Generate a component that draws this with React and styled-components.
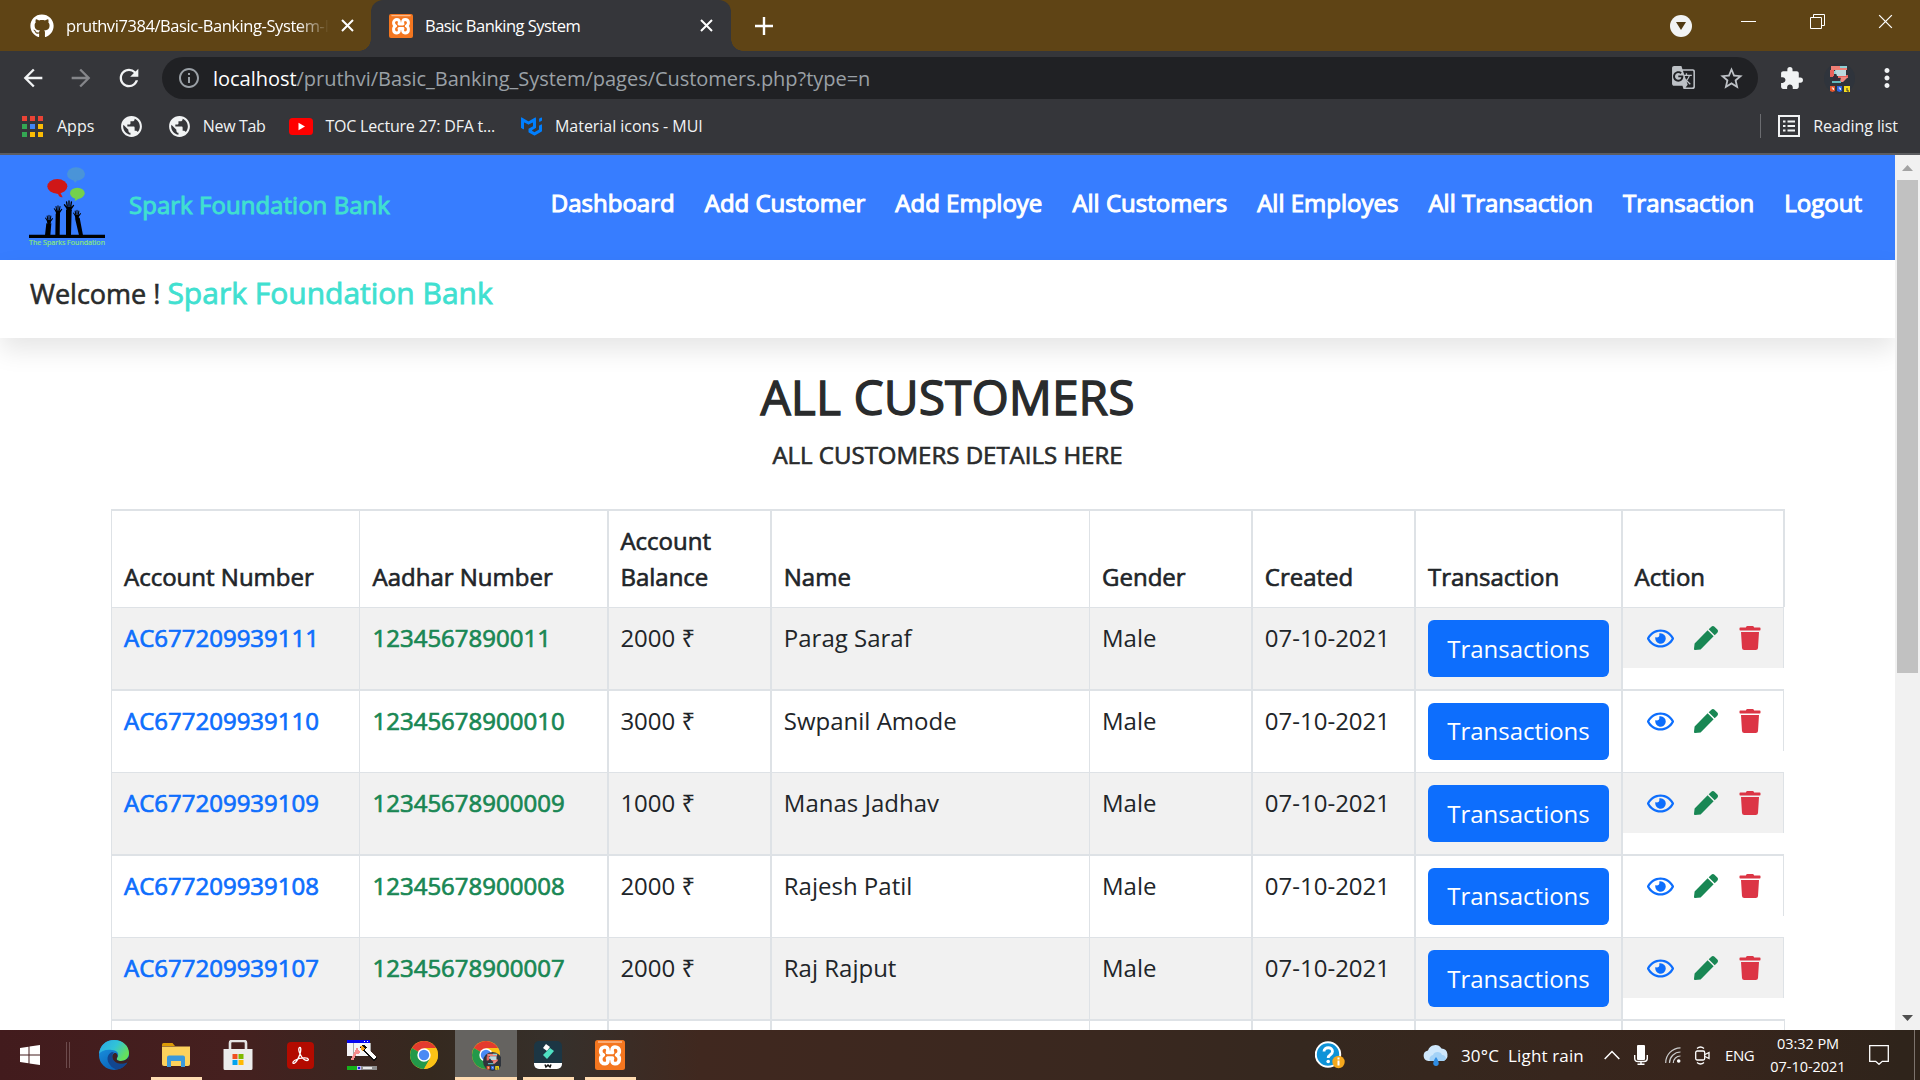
import React from "react";
import styled, { createGlobalStyle } from "styled-components";
import { FaGithub, FaRegEye, FaPen, FaTrash } from "react-icons/fa";
import { MdArrowBack, MdArrowForward, MdRefresh, MdInfoOutline, MdGTranslate, MdStarBorder, MdExtension, MdMoreVert, MdPublic } from "react-icons/md";
import { SiMui } from "react-icons/si";

const Global = createGlobalStyle`
  * { box-sizing: border-box; }
  body { margin: 0; background: #fff; overflow: hidden; }
  svg { display: block; flex: none; }
`;

const Screen = styled.div`
  width: 1920px; height: 1080px; overflow: hidden;
  display: flex; flex-direction: column;
  font-family: "Open Sans", "Noto Sans", sans-serif;
`;

/* ---------- browser chrome ---------- */
const TabStrip = styled.div`
  height: 51px; background: #5f4415; display: flex; flex: none; color: #fff;
`;
const Tab = styled.div`
  width: ${p => p.$width}px; height: 51px; padding: 0 18px 0 ${p => p.$left}px;
  display: flex; align-items: center; gap: 12px; flex: none;
  background: ${p => (p.$active ? "#35363a" : "transparent")};
  border-radius: 12px 12px 0 0; position: relative;
  &::before, &::after {
    content: ""; display: ${p => (p.$active ? "block" : "none")};
    position: absolute; bottom: 0; width: 12px; height: 12px;
  }
  &::before { left: -12px; background: radial-gradient(circle at 0 0, transparent 11.5px, #35363a 12px); }
  &::after { right: -12px; background: radial-gradient(circle at 100% 0, transparent 11.5px, #35363a 12px); }
`;
const TabTitle = styled.span`
  flex: 1; white-space: nowrap; font-size: 16.5px; line-height: 24px;
  letter-spacing: ${p => p.$spacing}px;
  mask-image: ${p => (p.$fade ? "linear-gradient(90deg,#000 88%,transparent)" : "none")};
`;
const NewTab = styled.div`
  width: 65px; display: flex; align-items: center; justify-content: center;
`;
const WindowButtons = styled.div`
  margin-left: auto; display: flex; padding: 14px 27px 0 0; gap: 53.5px; align-items: flex-start;
`;
const SearchTabs = styled.div`
  width: 22px; height: 22px; border-radius: 50%; background: #f1f3f4; margin: 1px -4px 0 0;
  display: flex; align-items: center; justify-content: center;
`;

const Toolbar = styled.div`
  height: 54px; padding: 6px 19px 6px 20px; display: flex; align-items: center; flex: none;
  background: #35363a; color: #f1f3f4;
`;
const NavButton = styled.div`
  width: 26px; margin-right: 22px; display: flex; justify-content: center;
  color: ${p => (p.$dim ? "#85868a" : "#f1f3f4")};
`;
const Omnibox = styled.div`
  width: 1596px; height: 42px; margin-left: -2px; padding: 0 13px 0 15px; border-radius: 21px; background: #202124;
  display: flex; align-items: center; color: #9aa0a6; flex: none;
`;
const Url = styled.span`
  margin-left: 12px; flex: 1; font-size: 20px; letter-spacing: -0.03px; white-space: nowrap; color: #9aa0a6;
  b { font-weight: 400; color: #fff; }
`;
const OmniIcons = styled.div`
  display: flex; gap: 22px; color: #bdc1c6;
`;
const ToolbarIcons = styled.div`
  display: flex; align-items: center; margin-left: 21px; gap: 20px;
  svg:last-child { margin-left: -3px; }
`;
const Bookmarks = styled.div`
  height: 48px; display: flex; align-items: center; padding: 0 22px 6px 22px; flex: none;
  background: #35363a; color: #f1f3f4; font-size: 16px;
`;
const Bookmark = styled.div`
  display: flex; align-items: center; gap: ${p => p.$gap ?? 13}px; margin-right: ${p => p.$after ?? 26}px;
  letter-spacing: ${p => p.$spacing ?? 0}px; white-space: pre;
`;
const Divider = styled.div`
  width: 1px; height: 24px; background: #6b6c70; margin: 0 17px 0 auto;
`;
const ChromeEdge = styled.div`
  height: 2px; background: #5c5d60; flex: none;
`;

/* ---------- page ---------- */
const Viewport = styled.div`
  height: 875px; display: flex; flex: none;
`;
const Page = styled.div`
  width: 1895px; overflow: hidden; background: #fff; color: #212529; font-size: 24px; line-height: 36px;
`;
const NavBar = styled.nav`
  height: 105px; background: #377dff; display: flex; padding-left: 20px;
`;
const Brand = styled.div`
  margin: 32px 0 0 9px; color: #40e0d0; -webkit-text-stroke: 0.9px #40e0d0; letter-spacing: 0.03px;
`;
const Menu = styled.div`
  margin: 30px 33px 0 auto; display: flex; gap: 30.05px; color: #fff; -webkit-text-stroke: 1.05px #fff;
  white-space: nowrap;
`;
const Welcome = styled.div`
  height: 78px; padding: 11px 0 0 30px; font-size: 27px; line-height: 43px; color: #292b2c;
  -webkit-text-stroke: 0.6px #292b2c; box-shadow: 0 12px 26px rgba(0,0,0,.1);
  span { font-size: 30px; color: #40e0d0; -webkit-text-stroke: 0.8px #40e0d0; }
`;
const Headings = styled.div`
  height: 171px; padding-top: 30px; text-align: center; color: #292b2c;
`;
const Title = styled.h2`
  margin: 0 0 15.4px; font-weight: 400; font-size: 48px; line-height: 57.6px; -webkit-text-stroke: 1.3px #292b2c;
`;
const Subtitle = styled.h5`
  margin: 0; font-weight: 400; font-size: 24px; line-height: 28.8px; -webkit-text-stroke: 0.65px #292b2c;
`;
const Table = styled.div`
  margin-left: 111px; width: 1674px;
`;
const Row = styled.div`
  display: grid; grid-template-columns: 248px 248px 163px 319px 162px 163px 207px 164px;
  height: ${p => p.$height}px;
`;
const Cell = styled.div`
  border: 0 solid #dee2e6; border-top-width: ${p => p.$top}px; border-left-width: ${p => p.$line}px;
  border-right-width: ${p => p.$right ?? 0}px;
  padding: 12px 0 12px ${p => p.$pad - p.$line}px;
  background: ${p => (p.$striped ? "#f1f1f1" : "#fff")};
`;
const HeadCell = styled(Cell)`
  display: flex; align-items: flex-end; -webkit-text-stroke: 0.65px #212529;
`;
const Strong = styled.span`
  color: ${p => p.$color}; -webkit-text-stroke: 0.7px ${p => p.$color};
`;
const Button = styled.div`
  width: 181px; height: 57px; border-radius: 6px; background: #0d6efd; color: #fff;
  display: flex; align-items: center; justify-content: center; padding-bottom: ${p => (p.$raised ? 2 : 0)}px;
`;
const ActionColumn = styled.div`
  border-left: 2px solid #dee2e6; border-top: ${p => p.$top}px solid #dee2e6; margin-right: 1px;
`;
const Actions = styled.div`
  height: 60px; border-right: 1px solid #dee2e6; padding: 0 21px 0 23.5px;
  background: ${p => (p.$striped ? "#f1f1f1" : "#fff")};
  display: flex; align-items: center; justify-content: space-between;
`;

const ScrollBar = styled.div`
  width: 25px; background: #f1f1f1; display: flex; flex-direction: column; align-items: center;
`;
const ScrollArrow = styled.div`
  height: 25px; width: 25px; display: flex; align-items: center; justify-content: center;
`;
const Thumb = styled.div`
  width: 21px; height: 493px; background: #c1c1c1; margin-bottom: auto;
`;

/* ---------- taskbar ---------- */
const TaskBar = styled.div`
  height: 50px; flex: none; display: flex; color: #fff;
  background: linear-gradient(90deg, #421b1d 0, #45201f 230px, #3a2620 360px, #35291f 430px, #36302b 560px, #40281f 700px, #3a281f 1100px, #35281f 1300px, #38251c 1700px, #2f241b 1900px);
`;
const Start = styled.div`
  width: 83px; padding: 15px 0 0 20px; display: flex; gap: 26px;
`;
const StartLine = styled.div`
  width: 4px; height: 26px; margin-top: -3px; border: 1px solid #6d4b4c; border-width: 0 1px;
`;
const TaskApp = styled.div`
  width: 62px; height: 50px; display: flex; align-items: center; justify-content: center;
  background: ${p => (p.$active ? "#656360" : "transparent")};
  box-shadow: ${p => (p.$active ? "inset 0 -3px #ffdcb2" : "none")};
`;
const OpenApp = styled(TaskApp)`
  background-image: linear-gradient(#ffdcb2, #ffdcb2); background-repeat: no-repeat;
  background-size: 51px 3px; background-position: 6px 47px;
`;
const Tray = styled.div`
  margin-left: auto; display: flex; align-items: center; height: 50px;
`;
const TraySlot = styled.div`
  width: ${p => p.$width}px; flex: none; white-space: pre; font-size: ${p => p.$size ?? 17}px;
  letter-spacing: ${p => p.$spacing ?? 0}px;
`;
const Clock = styled.div`
  width: 76px; text-align: center; font-size: 14.5px; line-height: 23px; margin-right: 23px; letter-spacing: -0.04px;
  white-space: nowrap;
`;
const DesktopEdge = styled.div`
  width: 6px; height: 50px; border-left: 1px solid #7c736d; margin-left: 25px;
`;

const Cross = ({ size = 13, w = 2 }) => (
  <svg width={size} height={size} viewBox="0 0 13 13" stroke="#fff" strokeWidth={w} fill="none"><path d="M1 1l11 11M12 1L1 12" /></svg>
);

const XamppLogo = ({ size }) => (
  <svg width={size} height={size} viewBox="0 0 30 30">
    <rect width="30" height="30" rx="2.5" fill="#f4761f" />
    <path d="M3 2h24" stroke="#fbb88a" strokeWidth="1.600" />
    <path d="M12.500 12.500c1-2.500.5-5.500-2.500-5.500-2.600 0-4.300 1.700-4.300 4 0 2 1 3.300 2.600 4-1.600.7-2.600 2-2.600 4 0 2.800 1.700 4.700 4.300 4.700 3 0 3.500-3 2.500-5.500h5c-1 2.500-.5 5.500 2.500 5.500 2.600 0 4.300-1.900 4.300-4.700 0-2-1-3.300-2.600-4 1.600-.7 2.600-2 2.600-4 0-2.300-1.700-4-4.300-4-3 0-3.500 3-2.500 5.500z"
      fill="none" stroke="#fff" strokeWidth="3.700" strokeLinejoin="round" />
  </svg>
);

const AppsGrid = () => (
  <svg width="21" height="21" viewBox="0 0 21 21">
    {["#ea4335", "#ea4335", "#ea4335", "#34a853", "#4285f4", "#fbbc04", "#34a853", "#fbbc04", "#fbbc04"].map((c, i) => (
      <rect key={i} x={(i % 3) * 8} y={Math.floor(i / 3) * 8} width="5" height="5" fill={c} />
    ))}
  </svg>
);

const Avatar = ({ size = 31 }) => (
  <svg width={size} height={size} viewBox="0 0 31 31">
    <circle cx="15.500" cy="15.500" r="15.500" fill="#2f343c" />
    <path d="M7 3h16v4H7z" fill="#ef7f75" /><path d="M16 3h7v2h-7zM8 8h6v3H8z" fill="#8fd0d4" />
    <path d="M6 7h4v7H6zM14 12h10v3H14z" fill="#e9635d" /><path d="M11 7h11v6H13z" fill="#bdd9de" />
    <path d="M9 13l5 1v4H9z" fill="#3b2a38" /><path d="M17 14h7l-5 5h-3z" fill="#ef8c82" /><path d="M8 18h9v2H8z" fill="#62b8bd" />
    <path d="M6 23h5v5l-2.500 1L6 28z" fill="#e4572e" /><path d="M13 23h5v5l-2.500 1L13 28z" fill="#2b65e3" /><path d="M20 23h6v6h-6z" fill="#f6dc1b" />
    <path d="M7.800 25h1.500v2M14.800 25h1.500v2" stroke="#fff" fill="none" /><path d="M23 25v3h2" stroke="#333" fill="none" />
  </svg>
);

const Hand = ({ x, y, s }) => (
  <g transform={`translate(${x} ${y}) scale(${s})`} stroke="#000" fill="none" strokeLinecap="round">
    <path d="M-7 12L-13 4M-5 8L-7-4M0 7V-7M5 8L7-4M7 14L13 6" strokeWidth="3.800" />
    <path d="M-9 9h18l-2 12-5 5h-5l-4-6z" fill="#000" stroke="none" />
  </g>
);

const SparksLogo = () => (
  <svg width="100" height="100" viewBox="0 0 300 300">
    <ellipse cx="168" cy="57" rx="27" ry="20" fill="#4a94d8" /><path d="M160 74l14-1-9 11z" fill="#4a94d8" />
    <ellipse cx="112" cy="94" rx="30" ry="22" fill="#cf1717" /><path d="M106 113l14-2 8 16c-10-1-12-5-14-11z" fill="#cf1717" />
    <ellipse cx="172" cy="115" rx="22" ry="17" fill="#74d14c" /><path d="M166 130l12 0-14 9z" fill="#74d14c" />
    <path d="M79 205h15l-3 36H75zM107 176h13l-1 65h-13zM138 165h17l-2 76h-15zM165 190l14-2 10 53h-12z" />
    <Hand x={87} y={186} s={0.8} /><Hand x={114} y={158} s={0.85} /><Hand x={147} y={145} s={1.05} /><Hand x={171} y={171} s={0.8} />
    <path d="M27 239h228v10H27z" />
    <text x="27" y="271" fill="#8ae67c" stroke="#8ae67c" strokeWidth=".5" fontSize="20" fontFamily="Open Sans" textLength="228" lengthAdjust="spacingAndGlyphs">The Sparks Foundation</text>
  </svg>
);

const ChromeLogo = () => (
  <>
    <circle cx="14" cy="14" r="14" fill="#fbc116" />
    <path d="M14 14L1.900 7A14 14 0 0 1 26.100 7z" fill="#e33b2e" />
    <path d="M1.900 7A14 14 0 0 0 14 28l6-10.500-6-3.500z" fill="#22994a" />
    <path d="M14 7h12.100A14 14 0 0 1 14 28l6-10.500z" fill="#fbc116" />
    <circle cx="14" cy="14" r="6.700" fill="#fff" /><circle cx="14" cy="14" r="5.200" fill="#4a8af4" />
  </>
);

const EdgeLogo = () => (
  <svg width="30" height="30" viewBox="0 0 30 30">
    <defs>
      <linearGradient id="eTop" x1="0" x2="1" y1="0" y2=".5"><stop offset="0" stopColor="#2aa6e6" /><stop offset=".55" stopColor="#31c3d8" /><stop offset="1" stopColor="#66e05a" /></linearGradient>
      <linearGradient id="eMid" x1="0" x2=".6" y1="0" y2="1"><stop offset="0" stopColor="#1c9be8" /><stop offset="1" stopColor="#0a5fb4" /></linearGradient>
    </defs>
    <circle cx="15" cy="15" r="15" fill="url(#eMid)" />
    <path d="M0 14C1 5 7 0 15 0c9 0 15 6 15 13 0 5-4 8-8 8-3 0-5-1-4-3 3-4 0-8-5-8C7 9 2 11 0 14z" fill="url(#eTop)" />
    <path d="M13 12c-5 2-6 8-2 13 2 3 6 5 9 4 4-1 7-4 8.500-6.500C23 25 15 24 13.500 18c-.6-2.500 0-4.500 1.500-5.500z" fill="#12468f" />
    <path d="M17 13c2 1.500 2 3.500 1 5-1 2 1 3 4 3 3 0 6-1.500 8-4.500-.2 2.500-.8 4.500-1.700 6C23 25 15 24 13.500 18c-.5-3 .5-5.500 3.500-5z" fill="#3d2021" />
  </svg>
);

const FolderLogo = () => (
  <svg width="28" height="24" viewBox="0 0 28 24">
    <path d="M0 1.500Q0 0 1.500 0h9L13 3H0z" fill="#dd9b06" /><path d="M0 3.500h28V21a2 2 0 0 1-2 2H2a2 2 0 0 1-2-2z" fill="#fdd25c" />
    <path d="M5 14.500a2 2 0 0 1 2-2h14a2 2 0 0 1 2 2V24h-4v-6h-10v6H5z" fill="#3b99db" />
  </svg>
);
const StoreLogo = () => (
  <svg width="30" height="30" viewBox="0 0 30 30">
    <path d="M7 9V3a2 2 0 0 1 2-2h12a2 2 0 0 1 2 2v6" fill="none" stroke="#e3e3e3" strokeWidth="2.600" /><path d="M0.500 9h29v19.500a1.500 1.500 0 0 1-1.500 1.500H2a1.500 1.500 0 0 1-1.500-1.500z" fill="#ececec" />
    <path d="M9.500 14h5v5h-5z" fill="#f05023" /><path d="M15.500 14h5v5h-5z" fill="#7fb900" /><path d="M9.500 20h5v5h-5z" fill="#02a4ef" /><path d="M15.500 20h5v5h-5z" fill="#ffb902" />
  </svg>
);
const AcrobatLogo = () => (
  <svg width="27" height="27" viewBox="0 0 27 27">
    <rect width="27" height="27" rx="4" fill="#b30b00" />
    <path d="M13 5.500c-2 0-1.300 4 .3 7 1.500 3 4.500 6 6.700 6s1.800-2.500-1.500-2.600c-3.500-.2-7.500.7-10.500 2.300-3.200 1.800-2.300 4-.6 3 2.200-1.400 4.200-5.400 5.500-9 1-3 1.300-6.700.1-6.700z" fill="none" stroke="#fff" strokeWidth="1.300" />
  </svg>
);
const RecorderLogo = () => (
  <svg width="30" height="30" viewBox="0 0 30 30" shapeRendering="crispEdges">
    <path d="M0 0h23v3H0z" fill="#0606f0" /><path d="M17 1h1M20 1h1" stroke="#fff" /><path d="M0 3h23v13H0z" fill="#f4f4f6" /><path d="M6 3v13M23 3v13" stroke="#aaa" />
    <path d="M5 20l5-10 2 3-3-3" stroke="#f58d8d" strokeWidth="3" fill="none" />
    <path d="M13 6l4-1 13 13-3 4-13-13z" fill="#111" /><path d="M17 10l3-2 9 9-2 3z" fill="#fff" /><path d="M13 6l3 0 2 3-3 2z" fill="#f5a21b" />
    <path d="M0 26h10v4H0z" fill="#16b11b" /><path d="M10 26h4v4h-4z" fill="#b9b3f5" /><path d="M14 26h16v4H14z" fill="#8f8f8f" /><path d="M16 27h9v2h-9z" fill="#e8e8e8" /><path d="M11 27h2v2h-2z" fill="#1b1be0" />
  </svg>
);
const FilmoraLogo = () => (
  <svg width="28" height="28" viewBox="0 0 28 28">
    <rect width="28" height="28" rx="5" fill="#1c3644" /><path d="M0 22h28v1a5 5 0 0 1-5 5H5a5 5 0 0 1-5-5z" fill="#fff" />
    <path d="M12 3l4 3-3 4-4-3z" fill="#fff" /><path d="M16 7l4 3-7 8-4-4z" fill="#4fe0c3" />
    <path d="M11 23.500l1 2.500 2-2 2 2 1-2.500" fill="none" stroke="#111" strokeWidth="1.500" />
  </svg>
);

const menu = ["Dashboard", "Add Customer", "Add Employe", "All Customers", "All Employes", "All Transaction", "Transaction", "Logout"];
const lines = [1, 1, 2, 2, 1, 2, 2, 2];
const pads = [13, 13.500, 13.400, 13.800, 13, 13.800, 14, 13.600];
const heads = ["Account Number", "Aadhar Number", <>Account<br />Balance</>, "Name", "Gender", "Created", "Transaction", "Action"];
const customers = [
  ["AC677209939111", "1234567890011", "2000 ₹", "Parag Saraf"],
  ["AC677209939110", "12345678900010", "3000 ₹", "Swpanil Amode"],
  ["AC677209939109", "12345678900009", "1000 ₹", "Manas Jadhav"],
  ["AC677209939108", "12345678900008", "2000 ₹", "Rajesh Patil"],
  ["AC677209939107", "12345678900007", "2000 ₹", "Raj Rajput"],
];

function CustomerRow({ data, index }) {
  const top = index % 2 ? 2 : 1;
  const striped = index % 2 === 0;
  const cells = [
    <Strong $color="#0d6efd">{data[0]}</Strong>, <Strong $color="#198754">{data[1]}</Strong>,
    data[2], data[3], "Male", "07-10-2021", <Button $raised={!striped}>Transactions</Button>,
  ];
  return (
    <Row $height={index % 2 ? 83 : 82}>
      {cells.map((c, i) => <Cell key={i} $top={top} $line={lines[i]} $pad={pads[i]} $striped={striped}>{c}</Cell>)}
      <ActionColumn $top={top}>
        <Actions $striped={striped}>
          <FaRegEye size={27} color="#0d6efd" />
          <FaPen size={24} color="#198754" />
          <FaTrash size={24} color="#dc3545" />
        </Actions>
      </ActionColumn>
    </Row>
  );
}

export default function App() {
  return (
    <Screen>
      <Global />
      <TabStrip>
        <Tab $width={371} $left={30}>
          <FaGithub size={24} />
          <TabTitle $fade $spacing={-0.42}>pruthvi7384/Basic-Banking-System-I</TabTitle>
          <Cross />
        </Tab>
        <Tab $active $width={360} $left={18}>
          <XamppLogo size={24} />
          <TabTitle $spacing={-0.53}>Basic Banking System</TabTitle>
          <Cross />
        </Tab>
        <NewTab>
          <svg width="18" height="18" stroke="#fff" strokeWidth="2.400"><path d="M9 0v18M0 9h18" /></svg>
        </NewTab>
        <WindowButtons>
          <SearchTabs><svg width="10" height="8"><path d="M0 0h10L5 8z" fill="#4f3912" /></svg></SearchTabs>
          <svg width="15" height="15" stroke="#fff"><path d="M0 7.500h15" /></svg>
          <svg width="15" height="15" stroke="#fff" fill="none"><path d="M.5 3.500h11v11h-11zM3.500 3V.5h11v11H12" /></svg>
          <Cross size={15} w={1.1} />
        </WindowButtons>
      </TabStrip>
      <Toolbar>
        <NavButton><MdArrowBack size={28} /></NavButton>
        <NavButton $dim><MdArrowForward size={28} /></NavButton>
        <NavButton><MdRefresh size={28} /></NavButton>
        <Omnibox>
          <MdInfoOutline size={24} />
          <Url><b>localhost</b>/pruthvi/Basic_Banking_System/pages/Customers.php?type=n</Url>
          <OmniIcons><MdGTranslate size={25} /><MdStarBorder size={27} /></OmniIcons>
        </Omnibox>
        <ToolbarIcons><MdExtension size={25} /><Avatar /><MdMoreVert size={30} /></ToolbarIcons>
      </Toolbar>
      <Bookmarks>
        <Bookmark $gap={14} $after={24.5}><AppsGrid />Apps</Bookmark>
        <Bookmark $after={23}><MdPublic size={25} /></Bookmark>
        <Bookmark $gap={11} $after={24} $spacing={-0.35}><MdPublic size={25} />New Tab</Bookmark>
        <Bookmark $spacing={-0.22} $gap={12}>
          <svg width="24" height="17"><rect width="24" height="17" rx="3.500" fill="#f00" /><path d="M9.500 4.800v7.400l6.500-3.700z" fill="#fff" /></svg>
          TOC Lecture 27: DFA t...
        </Bookmark>
        <Bookmark $spacing={-0.03}><SiMui size={21} color="#007fff" />Material icons - MUI</Bookmark>
        <Divider />
        <Bookmark $after={0} $spacing={-0.08}>
          <svg width="22" height="22" viewBox="0 0 22 22" stroke="#f1f3f4" fill="none" strokeWidth="2"><path d="M1 1h20v20H1zM5 6.500h2.500M9.500 6.500H17M5 11h2.500M9.500 11H17M5 15.500h2.500M9.500 15.500H17" /></svg>
          Reading list
        </Bookmark>
      </Bookmarks>
      <ChromeEdge />
      <Viewport>
        <Page>
          <NavBar>
            <SparksLogo />
            <Brand>Spark Foundation Bank</Brand>
            <Menu>{menu.map(m => <span key={m}>{m}</span>)}</Menu>
          </NavBar>
          <Welcome>Welcome ! <span>Spark Foundation Bank</span></Welcome>
          <Headings>
            <Title>ALL CUSTOMERS</Title>
            <Subtitle>ALL CUSTOMERS DETAILS HERE</Subtitle>
          </Headings>
          <Table>
            <Row $height={98}>
              {heads.map((h, i) => <HeadCell key={i} $top={2} $line={lines[i]} $pad={pads[i]} $right={i === 7 ? 2 : 0}><span>{h}</span></HeadCell>)}
            </Row>
            {customers.map((c, i) => <CustomerRow key={c[0]} data={c} index={i} />)}
            <Row $height={11}>
              {heads.map((h, i) => <Cell key={i} $top={2} $line={lines[i]} $pad={0} $right={i === 7 ? 1 : 0} />)}
            </Row>
          </Table>
        </Page>
        <ScrollBar>
          <ScrollArrow><svg width="11" height="6"><path d="M0 6L5.500 0 11 6z" fill="#a3a3a3" /></svg></ScrollArrow>
          <Thumb />
          <ScrollArrow><svg width="11" height="6"><path d="M0 0L5.500 6 11 0z" fill="#505050" /></svg></ScrollArrow>
        </ScrollBar>
      </Viewport>
      <TaskBar>
        <Start>
          <svg width="20" height="20" fill="#fff"><path d="M0 3l8.500-1.200v7.700H0zM9.500 1.600L20 0v9.500H9.500zM0 10.500h8.500v7.700L0 17zM9.500 10.500H20V20L9.500 18.400z" /></svg>
          <StartLine />
        </Start>
        <TaskApp><EdgeLogo /></TaskApp>
        <OpenApp><FolderLogo /></OpenApp>
        <TaskApp><StoreLogo /></TaskApp>
        <TaskApp><AcrobatLogo /></TaskApp>
        <TaskApp><RecorderLogo /></TaskApp>
        <TaskApp><svg width="28" height="28"><ChromeLogo /></svg></TaskApp>
        <TaskApp $active>
          <svg width="30" height="32" viewBox="-1 -2 30 32"><ChromeLogo /><g transform="translate(11 11)"><Avatar size={19} /></g></svg>
        </TaskApp>
        <OpenApp><FilmoraLogo /></OpenApp>
        <OpenApp><XamppLogo size={30} /></OpenApp>
        <Tray>
          <TraySlot $width={108}>
            <svg width="30" height="28" viewBox="0 0 30 28">
              <circle cx="13" cy="13.500" r="12.200" fill="#0e93d8" stroke="#fff" strokeWidth="2" />
              <path d="M9 10.500c0-5 8.500-5 8.500 0 0 3.500-4.300 3-4.300 6.500" fill="none" stroke="#fff" strokeWidth="2.800" /><circle cx="13.200" cy="20.500" r="1.800" fill="#fff" />
              <circle cx="23.500" cy="21" r="6.200" fill="#f5a81d" /><path d="M23.500 19.500v5M23.500 16.500v2" stroke="#fff" strokeWidth="2" />
            </svg>
          </TraySlot>
          <TraySlot $width={38.5}>
            <svg width="26" height="23" viewBox="0 0 26 23">
              <path d="M5.500 17a5.300 5.300 0 0 1-.5-10.500A7.500 7.500 0 0 1 18.500 4.500 6.400 6.400 0 0 1 20 17z" fill="#cfe8fc" /><path d="M7 17a4 4 0 0 1 3-6c1-4 8-4 9 0 5 0 5 6 1 6z" fill="#a3d2f7" />
              <path d="M13 13c1.800 2.500 2.700 4.500 2.700 6.300a2.700 2.700 0 0 1-5.400 0c0-1.800.9-3.800 2.700-6.300z" fill="#2f8de4" />
            </svg>
          </TraySlot>
          <TraySlot $width={143} $size={17} $spacing={0.14}>{"30°C  Light rain"}</TraySlot>
          <TraySlot $width={30}><svg width="16" height="10" fill="none" stroke="#fff" strokeWidth="1.500"><path d="M.7 9L8 1.500 15.300 9" /></svg></TraySlot>
          <TraySlot $width={31}><svg width="14" height="20" fill="none" stroke="#fff" strokeWidth="1.400"><rect x="3" y="0" width="8" height="15" rx="1" fill="#fff" stroke="none" /><path d="M.7 10v3.500Q.7 16.500 4 16.500h6q3.300 0 3.300-3V10M7 16.500V19.300M3.500 19.300h7" /></svg></TraySlot>
          <TraySlot $width={30}><svg width="16" height="16" fill="none" stroke="#ccc" strokeWidth="1.200"><path d="M.7 16A15 15 0 0 1 15.500.8M4.500 16A11 11 0 0 1 15.500 5M8.300 16A7 7 0 0 1 15.500 9" /><circle cx="13.700" cy="14" r="1.800" fill="#fff" stroke="none" /></svg></TraySlot>
          <TraySlot $width={30}><svg width="16" height="19" fill="none" stroke="#fff" strokeWidth="1.300"><rect x=".7" y="5" width="9" height="9" rx="1.500" /><path d="M10 8.500l4-2v6l-4-2M2 2.500Q5.500-.5 9 2.500M2 16.500q3.500 3 7 0" /></svg></TraySlot>
          <TraySlot $width={45} $size={15} $spacing={-0.4}>ENG</TraySlot>
          <Clock>03:32 PM<br />07-10-2021</Clock>
          <svg width="20" height="20" fill="none" stroke="#fff" strokeWidth="1.300"><path d="M.7.700h18.600v15.600h-6L10 19.300l-3.300-3H.7z" /></svg>
          <DesktopEdge />
        </Tray>
      </TaskBar>
    </Screen>
  );
}
